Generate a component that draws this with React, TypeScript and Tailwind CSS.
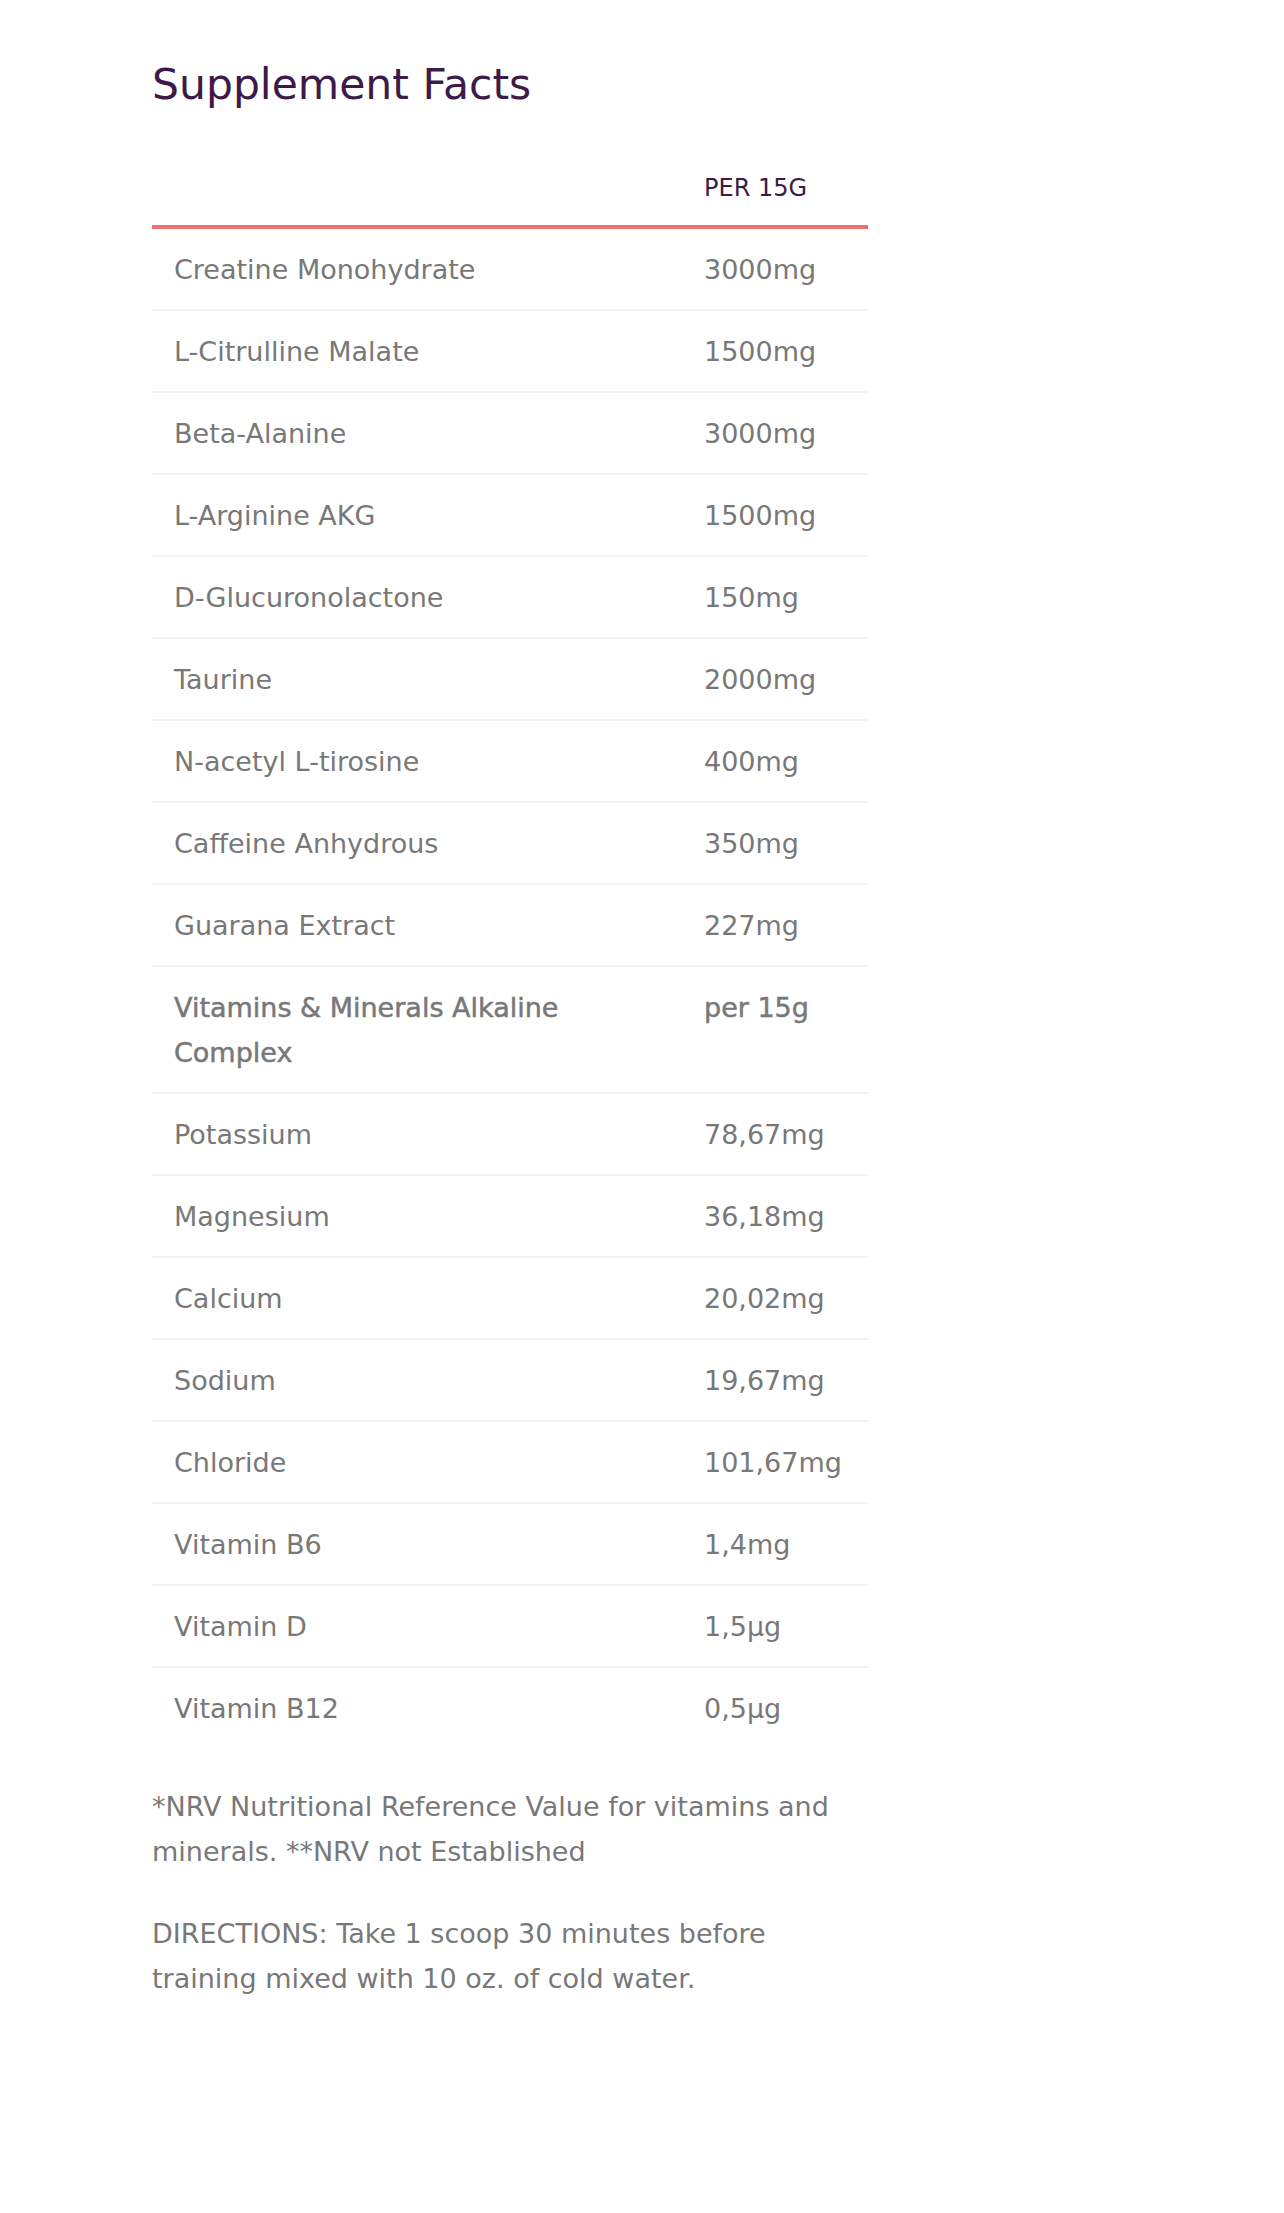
import React from "react";

const rows: { name: string; value: string; bold?: boolean }[] = [
  { name: "Creatine Monohydrate", value: "3000mg" },
  { name: "L-Citrulline Malate", value: "1500mg" },
  { name: "Beta-Alanine", value: "3000mg" },
  { name: "L-Arginine AKG", value: "1500mg" },
  { name: "D-Glucuronolactone", value: "150mg" },
  { name: "Taurine", value: "2000mg" },
  { name: "N-acetyl L-tirosine", value: "400mg" },
  { name: "Caffeine Anhydrous", value: "350mg" },
  { name: "Guarana Extract", value: "227mg" },
  { name: "Vitamins & Minerals Alkaline Complex", value: "per 15g", bold: true },
  { name: "Potassium", value: "78,67mg" },
  { name: "Magnesium", value: "36,18mg" },
  { name: "Calcium", value: "20,02mg" },
  { name: "Sodium", value: "19,67mg" },
  { name: "Chloride", value: "101,67mg" },
  { name: "Vitamin B6", value: "1,4mg" },
  { name: "Vitamin D", value: "1,5µg" },
  { name: "Vitamin B12", value: "0,5µg" },
];

const font = { fontFamily: '"DejaVu Sans", "Noto Sans", sans-serif' };

export default function App() {
  return (
    <div className="min-h-[2213px] w-full bg-white">
      <div className="ml-[152px] w-[716px] pt-[56px]" style={font}>
        <h2 className="text-[42.5px] leading-[58px] font-normal text-[#3d1a47]">
          Supplement Facts
        </h2>
        <table className="mt-[56px] w-full border-collapse text-[#787878]">
          <thead>
            <tr className="border-b-[4px] border-[#ee7070]">
              <th className="w-[530px]"></th>
              <th className="pl-[22px] pb-[19px] text-left text-[24px] leading-[36px] font-normal text-[#3d1a47]">
                PER 15G
              </th>
            </tr>
          </thead>
          <tbody>
            {rows.map((r, i) => (
              <tr
                key={i}
                className={i === rows.length - 1 ? "" : "border-b-2 border-[#f3f3f3]"}
              >
                <td
                  className={
                    "pl-[22px] pr-[40px] pt-[18px] pb-[17px] align-top text-[27px] leading-[45px] " +
                    (r.bold ? "[-webkit-text-stroke:0.5px_#787878]" : "")
                  }
                >
                  {r.name}
                </td>
                <td
                  className={
                    "pl-[22px] pt-[18px] pb-[17px] align-top text-[27px] leading-[45px] " +
                    (r.bold ? "[-webkit-text-stroke:0.5px_#787878]" : "")
                  }
                >
                  {r.value}
                </td>
              </tr>
            ))}
          </tbody>
        </table>
        <div className="mt-[36px] text-[27px] leading-[45px] text-[#787878]">
          <p>*NRV Nutritional Reference Value for vitamins and minerals. **NRV not Established</p>
          <p className="mt-[37px]">
            DIRECTIONS: Take 1 scoop 30 minutes before training mixed with 10 oz. of cold water.
          </p>
        </div>
      </div>
    </div>
  );
}
